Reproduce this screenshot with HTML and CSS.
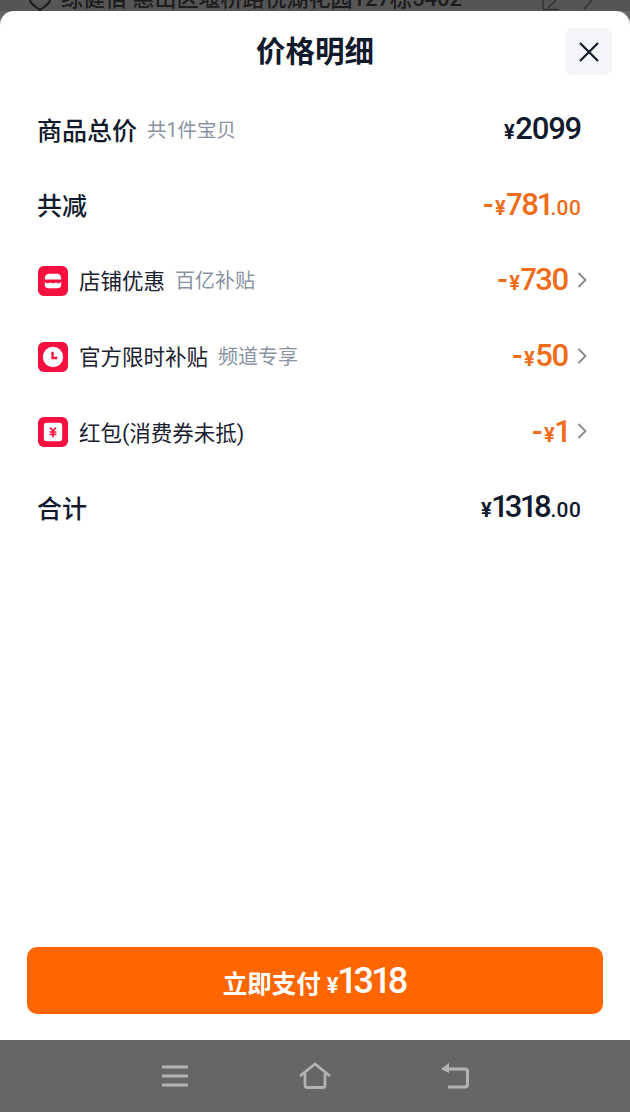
FILE: index.html
```html
<!DOCTYPE html>
<html lang="zh-CN">
  <head>
    <meta charset="UTF-8" />
    <meta name="viewport" content="width=device-width, initial-scale=1.0" />
    <title>价格明细</title>
    <link rel="stylesheet" href="styles.css">
  </head>
  <body>
    <div class="backdrop">
      <svg class="pin" width="24" height="12" viewBox="0 0 24 12"><path d="M2 0c0 3 3 5 10 10 7-5 10-7 10-10" fill="none" stroke="#1c1c1c" stroke-width="2"/></svg>
      <span class="address">综健佰 惠山区堰桥路悦湖花园127栋5402</span>
      <svg class="edit" width="20" height="11" viewBox="0 0 20 11"><path d="M2 0v8c0 1 .5 1.500 1.500 1.500H18M7 8 15 0" fill="none" stroke="#333" stroke-width="1.500"/></svg>
      <svg class="more" width="12" height="11" viewBox="0 0 12 11"><path d="M10 0 2 9" fill="none" stroke="#333" stroke-width="1.500"/></svg>
    </div>

    <div class="sheet">
      <div class="sheet-head">
        <h1>价格明细</h1>
        <button class="close" aria-label="关闭">
          <svg width="24" height="24" viewBox="0 0 24 24"><path d="M3 3 21 21M21 3 3 21" stroke="#111a2c" stroke-width="2.200" fill="none"/></svg>
        </button>
      </div>

      <div class="rows">
        <div class="row">
          <span class="name strong">商品总价</span>
          <span class="note first">共1件宝贝</span>
          <span class="price dark"><i>¥</i>2099</span>
        </div>
        <div class="row">
          <span class="name strong">共减</span>
          <span class="price orange">-<i>¥</i>781<small>.00</small></span>
        </div>
        <div class="row">
          <svg class="badge" width="30" height="30" viewBox="0 0 31 31">
            <rect width="31" height="31" rx="6" fill="#f5113f"/>
            <path d="M7 14C7 9.500 9 8 12 8h7c3 0 5 1.500 5 6z" fill="#fff"/>
            <path d="M7 16.500c2 1.500 3.500 1.500 5.500.5 2 1 4 1 6 0 2 1 3.500 1 5.500-.5v3c0 2.500-1.500 3.500-4 3.500h-9c-2.500 0-4-1-4-3.500z" fill="#fff"/>
          </svg>
          <span class="name">店铺优惠</span>
          <span class="note">百亿补贴</span>
          <span class="price orange">-<i>¥</i>730</span>
          <svg class="arrow" width="10" height="16" viewBox="0 0 10 16"><path d="M1.500 1 8.500 8 1.500 15" fill="none" stroke="#85888e" stroke-width="1.800"/></svg>
        </div>
        <div class="row">
          <svg class="badge" width="30" height="30" viewBox="0 0 31 31">
            <rect width="31" height="31" rx="6" fill="#f5113f"/>
            <circle cx="15.500" cy="15.500" r="10.500" fill="#fff"/>
            <path d="M15 10v6.500h5" fill="none" stroke="#f5113f" stroke-width="2.400"/>
          </svg>
          <span class="name">官方限时补贴</span>
          <span class="note">频道专享</span>
          <span class="price orange">-<i>¥</i>50</span>
          <svg class="arrow" width="10" height="16" viewBox="0 0 10 16"><path d="M1.500 1 8.500 8 1.500 15" fill="none" stroke="#85888e" stroke-width="1.800"/></svg>
        </div>
        <div class="row">
          <svg class="badge" width="30" height="30" viewBox="0 0 31 31">
            <rect width="31" height="31" rx="6" fill="#f5113f"/>
            <rect x="6" y="6" width="19" height="19" rx="3" fill="#fff"/>
            <path d="M12.500 11 15.500 14.500l3-3.500M12 15.500h7M12 18h7M15.500 14.500V21" fill="none" stroke="#f5113f" stroke-width="1.700"/>
          </svg>
          <span class="name">红包(消费券未抵)</span>
          <span class="price orange">-<i>¥</i>1</span>
          <svg class="arrow" width="10" height="16" viewBox="0 0 10 16"><path d="M1.500 1 8.500 8 1.500 15" fill="none" stroke="#85888e" stroke-width="1.800"/></svg>
        </div>
        <div class="row">
          <span class="name strong">合计</span>
          <span class="price dark"><i>¥</i>1318<small>.00</small></span>
        </div>
      </div>

      <button class="pay">立即支付 <i>¥</i><b>1318</b></button>
    </div>

    <div class="navbar">
      <svg width="32" height="28" viewBox="0 0 32 28"><path d="M3 5h26M3 14h26M3 23h26" stroke="#b3b3b3" stroke-width="3" fill="none"/></svg>
      <svg width="32" height="28" viewBox="0 0 32 28"><path d="M1 14 16 2l15 12M6 11.500V23c0 1.500 1 2.500 2.500 2.500h15c1.500 0 2.500-1 2.500-2.500V11.500" stroke="#b3b3b3" stroke-width="2.800" fill="none"/></svg>
      <svg width="32" height="28" viewBox="0 0 32 28"><path d="M5 7h21c1.500 0 2.500 1 2.500 2.500v13c0 1.500-1 2.500-2.500 2.500H9" stroke="#b3b3b3" stroke-width="3" fill="none"/><path d="M10 1v10L2 7z" fill="#b3b3b3"/></svg>
    </div>
  </body>
</html>
```

FILE: styles.css
```css
html, body {
  margin: 0;
  height: 100%;
}
body {
  display: flex;
  flex-direction: column;
  height: 1112px;
  overflow: hidden;
  background: #666;
  color: #111a2c;
  font-family: "Roboto", "Noto Sans CJK SC", sans-serif;
}
.backdrop {
  display: flex;
  align-items: flex-start;
  height: 11px;
  padding-left: 28px;
  overflow: hidden;
  background: #555;
  color: #1c1c1c;
  font-size: 22px;
  font-weight: 500;
  line-height: 22px;
}
.pin {
  flex: none;
}
.address {
  flex: none;
  width: 420px;
  margin: -12px 0 0 9px;
  white-space: nowrap;
}
.edit {
  flex: none;
  margin-left: 60px;
}
.more {
  flex: none;
  margin-left: 21px;
}
.sheet {
  display: flex;
  flex: 1;
  flex-direction: column;
  background: #fff;
  border-radius: 14px 14px 0 0;
}
.sheet-head {
  display: flex;
  justify-content: center;
  align-items: center;
  position: relative;
  height: 82px;
  flex: none;
}
.sheet-head h1 {
  margin: 0;
  font-size: 29.500px;
  font-weight: 700;
  line-height: 82px;
}
.close {
  position: absolute;
  top: 17px;
  right: 18px;
  display: flex;
  justify-content: center;
  align-items: center;
  width: 47px;
  height: 47px;
  padding: 0;
  border: none;
  border-radius: 8px;
  background: #f3f5f8;
}
.rows {
  display: flex;
  flex: 1;
  flex-direction: column;
  margin-top: -2px;
  padding: 0 49px 0 38px;
}
.row {
  display: flex;
  align-items: center;
  height: 75.600px;
  flex: none;
  font-size: 21.500px;
}
.badge {
  flex: none;
  margin: 2px 11px 0 0;
}
.name {
  color: #1a2130;
}
.name.strong {
  margin-left: -1px;
  font-size: 25px;
  font-weight: 500;
  color: #111a2c;
}
.note {
  margin-left: 10px;
  color: #8a93a3;
  font-size: 20px;
}
.note.first {
  font-size: 19.500px;
}
.price {
  margin-left: auto;
  font-size: 31px;
  font-weight: 500;
  font-variant-numeric: proportional-nums;
  letter-spacing: -1.500px;
}
.price i {
  margin: 0 2px 0 3px;
  font-size: 20px;
  font-weight: 700;
  font-style: normal;
}
.price small {
  font-size: 21px;
  font-weight: 500;
  letter-spacing: 0;
}
.price.dark {
  color: #111a2c;
}
.price.orange {
  color: #ef6c1a;
}
.arrow {
  flex: none;
  margin: 0 -6px 0 9px;
}
.pay {
  flex: none;
  align-self: center;
  width: 576px;
  height: 67px;
  margin-bottom: 26px;
  border: none;
  border-radius: 10px;
  background: #ff6600;
  color: #fff;
  font-family: inherit;
  font-size: 24.500px;
  font-weight: 700;
}
.pay i {
  font-style: normal;
  font-size: 22px;
}
.pay b {
  font-size: 36px;
  font-weight: 500;
  font-variant-numeric: proportional-nums;
  letter-spacing: -1.500px;
}
.navbar {
  display: flex;
  flex: none;
  justify-content: center;
  align-items: center;
  gap: 108px;
  height: 72px;
  background: #666;
}
```
